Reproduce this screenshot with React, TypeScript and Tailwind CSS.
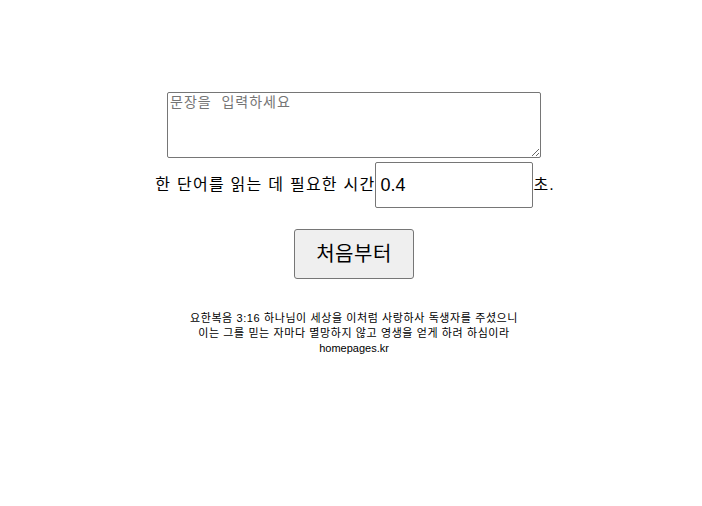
const FONT = "font-['Liberation_Sans','Noto_Sans_CJK_KR',sans-serif]";

export default function App() {
  return (
    <div className={`${FONT} w-[702px] h-[506px] bg-white text-black pl-[6px]`}>
      <div className="flex flex-col items-center pt-[92px]">
        {/* sentence input */}
        <textarea
          placeholder="문장을  입력하세요"
          className={`${FONT} block w-[374px] h-[66px] border border-[#767676] rounded-[2px] px-[2px] py-[1px] text-[14px] leading-[17px] tracking-[1px] placeholder:text-[#757575] resize-y`}
        />

        {/* time per word */}
        <div className="flex items-center mt-[4px] text-[16px] pl-[2px]">
          <span className="tracking-[1.25px]">한 단어를 읽는 데 필요한 시간</span>
          <input
            defaultValue="0.4"
            className={`${FONT} w-[158px] h-[46px] border border-[#767676] rounded-[2px] px-[4px] text-[18px]`}
          />
          <span className="tracking-[1px]">초.</span>
        </div>

        <button
          className={`${FONT} mt-[21px] w-[120px] h-[50px] bg-[#efefef] border border-[#767676] rounded-[3px] text-[20px] tracking-[0.5px]`}
        >
          처음부터
        </button>

        {/* footer verse */}
        <div className="mt-[32px] text-center text-[11px] leading-[15px] tracking-[0.6px]">
          <div>요한복음 3:16 하나님이 세상을 이처럼 사랑하사 독생자를 주셨으니</div>
          <div>이는 그를 믿는 자마다 멸망하지 않고 영생을 얻게 하려 하심이라</div>
          <div className="tracking-normal">homepages.kr</div>
        </div>
      </div>
    </div>
  );
}
